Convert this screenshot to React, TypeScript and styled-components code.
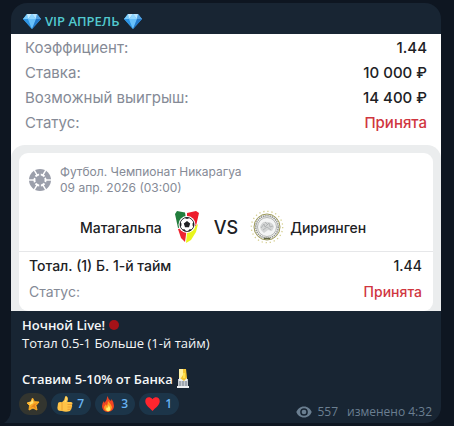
import React from "react";
import styled, { createGlobalStyle } from "styled-components";

const GlobalStyle = createGlobalStyle`
  *, *::before, *::after { box-sizing: border-box; }
  body {
    margin: 0;
    background: #0e1621;
    font-family: "Open Sans", "Noto Sans", sans-serif;
  }
`;

const Chat = styled.main`
  padding: 3px 13px 3px 11px;
`;

const Message = styled.article`
  position: relative;
  background: #182533;
  border-radius: 16px 16px 16px 0;
`;

const Tail = styled.svg`
  position: absolute;
  left: -7px;
  bottom: 0;
  width: 7px;
  height: 12px;
`;

const Header = styled.header`
  display: flex;
  align-items: center;
  gap: 4px;
  height: 31px;
  padding: 4px 12px 0;
`;

const Channel = styled.a`
  color: #52c9cf;
  font-size: 13px;
  font-weight: 600;
  line-height: 18px;
  text-decoration: none;
`;

const Photo = styled.section`
  background: #ffffff;
  font-family: Inter, Roboto, sans-serif;
`;

const Summary = styled.dl`
  margin: 0;
  padding: 1px 14px 10px;
`;

const SummaryRow = styled.div`
  display: flex;
  justify-content: space-between;
  font-size: 15px;
  line-height: 25px;
`;

const Label = styled.dt`
  color: #858a96;
`;

const Value = styled.dd<{ $accepted?: boolean }>`
  margin: 0;
  font-weight: 500;
  color: ${(p) => (p.$accepted ? "#d0363f" : "#202124")};
`;

const CardFrame = styled.div`
  padding: 8px 8px 0;
  background: #ebedee;
  border-radius: 14px 14px 0 0;
`;

const Card = styled.div`
  background: #ffffff;
  border-radius: 9px;
`;

const Event = styled.div`
  display: flex;
  align-items: center;
  gap: 9px;
  padding: 11px 10px 0;
`;

const EventText = styled.p`
  margin: 0;
  color: #858a96;
  font-size: 12px;
  line-height: 16px;
`;

const Teams = styled.div`
  display: grid;
  grid-template-columns: 1fr auto 1fr;
  align-items: center;
  gap: 12px;
  height: 56px;
  padding-top: 7px;
  border-bottom: 1px solid #e6e7e9;
`;

const Team = styled.div<{ $away?: boolean }>`
  display: flex;
  align-items: center;
  justify-content: ${(p) => (p.$away ? "flex-start" : "flex-end")};
  gap: ${(p) => (p.$away ? 6 : 12)}px;
  padding-right: ${(p) => (p.$away ? 0 : 2)}px;
  color: #202124;
  font-size: 14px;
  font-weight: 500;
`;

const Versus = styled.span`
  color: #202124;
  font-size: 18px;
  font-weight: 500;
`;

const Bets = styled.dl`
  margin: 0;
  padding: 1px 11px 6px 10px;
`;

const BetRow = styled.div`
  display: flex;
  justify-content: space-between;
  font-size: 14px;
  line-height: 26px;
`;

const BetName = styled.dt`
  color: #202124;
  font-weight: 500;
`;

const Caption = styled.div`
  padding: 5px 11px 0;
  color: #f5f7f8;
  font-size: 13px;
  line-height: 18px;
`;

const Line = styled.p<{ $bold?: boolean; $spaced?: boolean }>`
  display: flex;
  align-items: center;
  gap: 4px;
  height: 18px;
  margin: ${(p) => (p.$spaced ? "18px 0 0" : "0")};
  font-weight: ${(p) => (p.$bold ? 600 : 400)};
`;

const Footer = styled.footer`
  display: flex;
  align-items: flex-end;
  justify-content: space-between;
  padding: 5px 9px 2px 8px;
`;

const Reactions = styled.div`
  display: flex;
  gap: 4px;
  padding-bottom: 6px;
`;

const Reaction = styled.button<{ $paid?: boolean }>`
  display: flex;
  align-items: center;
  justify-content: ${(p) => (p.$paid ? "center" : "space-between")};
  width: ${(p) => (p.$paid ? 28 : 40)}px;
  height: 22px;
  padding: ${(p) => (p.$paid ? "0" : "0 7px 0 6px")};
  border: 0;
  border-radius: 11px;
  background: ${(p) => (p.$paid ? "#33352f" : "#1c3549")};
  color: #67b3f3;
  font: 600 12px/22px "Open Sans", "Noto Sans", sans-serif;
  cursor: pointer;
`;

const Meta = styled.div`
  display: flex;
  align-items: center;
  gap: 5px;
  color: #6b7f91;
  font-size: 12px;
  line-height: 18px;
`;

const Edited = styled.span`
  margin-left: 4px;
`;

const Diamond = () => (
  <svg width="18" height="16" viewBox="0 0 18 16" aria-hidden="true">
    <path d="M4 1h10l4 5-9 10L0 6z" fill="#44a9ee" />
    <path d="M4 1 0 6h5z" fill="#79cbfa" />
    <path d="M4 1h5L5 6z" fill="#c5ecff" />
    <path d="M9 1 5 6h8z" fill="#8ed6ff" />
    <path d="M9 1h5l-1 5z" fill="#b8e5ff" />
    <path d="m14 1 4 5h-5z" fill="#529fdf" />
    <path d="M0 6h5l4 10z" fill="#2d94e4" />
    <path d="M5 6h8L9 16z" fill="#68c0fa" />
    <path d="M13 6h5L9 16z" fill="#2478c8" />
  </svg>
);

const SportBall = () => (
  <svg width="22" height="22" viewBox="-11 -11 22 22" aria-hidden="true">
    <circle r="11" fill="#9b9fab" />
    <circle r="5.600" fill="none" stroke="#fff" strokeWidth="2" />
    {[0, 60, 120, 180, 240, 300].map((angle) => (
      <g key={angle} transform={`rotate(${angle})`}>
        <path d="M6 0h5.500" stroke="#fff" strokeWidth="1.400" />
        <path d="M3.500-2.100 7-4.100" stroke="#9b9fab" strokeWidth="1.600" />
      </g>
    ))}
  </svg>
);

const HomeCrest = () => (
  <svg width="26" height="34" viewBox="0 0 26 34" role="img" aria-label="Матагальпа">
    <path d="M3 1 11 2.500 13 16 4 18 1 4z" fill="#217d3c" />
    <path d="M13 3 22 1 25 3 22 16 13 16z" fill="#ed1c2c" />
    <path d="M4 19 13 17 11 32 7 28z" fill="#ee2430" />
    <path d="M24 14 22 22 17 30 12 33 13 23z" fill="#e9f51c" />
    <circle cx="13" cy="14.500" r="8.500" fill="#fff" />
    <circle cx="13" cy="14.500" r="7" fill="#fff" stroke="#202224" strokeWidth=".9" />
    <path d="m13 11 3.200 2.400-1.200 3.800h-4l-1.200-3.800zM10.500 7.800l2.500 1.200 2.500-1.200-2.500-.6zM20 12l-1.500 1.500.2 2.500 1.300.8zM6 12l1.500 1.500-.2 2.500-1.300.8zM8 19.500l2.500-.3 1.500 2-1.800-.3zM18 19.500l-2.500-.3-1.500 2 1.800-.3z" fill="#202224" />
  </svg>
);

const AwayCrest = () => (
  <svg width="34" height="34" viewBox="0 0 34 34" role="img" aria-label="Дириянген">
    <circle cx="17" cy="17" r="15.700" fill="none" stroke="#d5cf90" strokeWidth="1.300" strokeDasharray="1.300 2.800" />
    <circle cx="17" cy="17" r="13" fill="#f7f7f3" stroke="#9b9858" strokeWidth="1" />
    <circle cx="17" cy="17" r="11.200" fill="none" stroke="#8f9292" strokeWidth="1.600" strokeDasharray="1.400 .8" />
    <circle cx="17" cy="17" r="9.500" fill="#f4f5f5" stroke="#969999" strokeWidth=".7" />
    <path d="M10 17q2-6 7-5 6 0 7 5l-2 4-4-1-4 3-3-3z" fill="#d3d5d5" />
    <path d="m11 18 3-4 1 3 4-4 1 4 3-1M13 20l4-3 4 3M15 12l3 3" fill="none" stroke="#a5a8a9" strokeWidth=".7" />
    <path d="M14 28.500h6" stroke="#626747" strokeWidth="1.500" />
  </svg>
);

const RedDot = () => (
  <svg width="10" height="10" viewBox="0 0 10 10" aria-hidden="true">
    <circle cx="5" cy="5" r="5" fill="#a51218" />
  </svg>
);

const Candle = () => (
  <svg width="12" height="20" viewBox="0 0 12 20" aria-hidden="true">
    <path d="M1 10h10v8H1z" fill="#c5cbd1" />
    <path d="M0 17h12v2H0z" fill="#edf0f2" />
    <path d="M2 9h8v3H2z" fill="#eef0f2" />
    <path d="M3 12v5M6 12v5M9 12v5" stroke="#78828e" />
    <path d="M2 0h7l1 9-3 3-4-3z" fill="#f5c532" />
    <path d="M2 0h4v6L4 9H2z" fill="#fff1a3" />
    <path d="M6 4h2v5H6z" fill="#ffe34f" />
  </svg>
);

const Star = () => (
  <svg width="14" height="14" viewBox="0 0 14 14" aria-hidden="true">
    <path d="m6.500 1 2 3.700L13 5l-3 3.500 1 4.500-4-2-4 2 .5-4.500L1 6l4-1.200z" fill="#fbad26" stroke="#fbad26" strokeWidth="1" strokeLinejoin="round" />
    <path d="m6.500 2 1 4L3 8.500 4 6 1.500 5.800 5 5z" fill="#ffe174" />
    <path d="m8 7 4-1-3 2 1 4-3-2-3 1z" fill="#e9851f" />
  </svg>
);

const ThumbsUp = () => (
  <svg width="16" height="16" viewBox="0 0 16 16" aria-hidden="true">
    <path d="M1 7.500Q1 6 3 6l2 .3Q8 4 8 1q0-1 1.300-1Q11 1 11 3L10.300 6H14q2 .3 1.400 2l-.4 1 .2 1.500-.6 1.200-.3 1.500-.8 1L13 15q-4 1.500-8 0l-3-.3Q0 14 .5 11z" fill="#ffc347" />
    <path d="M5 6.500v8M10.500 8.500H15M10.500 11H15M10.500 13.300h3.500" stroke="#e6952c" strokeWidth=".8" fill="none" />
    <path d="M9 1q1 2-1 5" stroke="#ffe277" fill="none" />
  </svg>
);

const Flame = () => (
  <svg width="14" height="16" viewBox="0 0 14 16" aria-hidden="true">
    <path d="M6.500 0Q7 3 10 5l.5-2Q13 6 13 10q0 5-6 6-6-.5-6-6 0-3 2-5l.5 2Q6 4 6.500 0z" fill="#f04422" />
    <path d="M7 5q3 3 4 6-.5 4-4 4.500Q3 15 3 11l2-3 .5 2Q7 8 7 5z" fill="#ff9f22" />
    <path d="M7.500 9Q10 12 9 14.500q-3 2-4-1.500l1-2 .5 1q1-1 1-3z" fill="#fff06a" />
  </svg>
);

const Heart = () => (
  <svg width="15" height="14" viewBox="0 0 15 14" aria-hidden="true">
    <path d="M7.500 2.200C5-1 0-.2.300 4.500.5 8.500 5 11 7.500 14 10 11 14.500 8.500 14.700 4.500 15-.2 10-1 7.500 2.200z" fill="#ff252e" />
  </svg>
);

const Eye = () => (
  <svg width="16" height="12" viewBox="0 0 16 12" aria-hidden="true">
    <path d="M8 0.500C4 .5 1.500 3 .3 6 1.500 9 4 11.500 8 11.500S14.500 9 15.700 6C14.500 3 12 .5 8 .5z" fill="#6b7f91" />
    <circle cx="8" cy="6" r="3.100" fill="none" stroke="#182533" strokeWidth="1.500" />
  </svg>
);

const summary = [
  { label: "Коэффициент:", value: "1.44" },
  { label: "Ставка:", value: "10 000 ₽" },
  { label: "Возможный выигрыш:", value: "14 400 ₽" },
  { label: "Статус:", value: "Принята", accepted: true },
];

const reactions = [
  { name: "Палец вверх", icon: <ThumbsUp />, count: 7 },
  { name: "Огонь", icon: <Flame />, count: 3 },
  { name: "Сердце", icon: <Heart />, count: 1 },
];

export default function App() {
  return (
    <>
      <GlobalStyle />
      <Chat>
        <Message>
          <Tail viewBox="0 0 7 12" aria-hidden="true">
            <path d="M7 0Q6 8 0 12h7z" fill="#182533" />
          </Tail>
          <Header>
            <Diamond />
            <Channel href="#channel">VIP АПРЕЛЬ</Channel>
            <Diamond />
          </Header>
          <Photo>
            <Summary>
              {summary.map((row) => (
                <SummaryRow key={row.label}>
                  <Label>{row.label}</Label>
                  <Value $accepted={row.accepted}>{row.value}</Value>
                </SummaryRow>
              ))}
            </Summary>
            <CardFrame>
              <Card>
                <Event>
                  <SportBall />
                  <EventText>
                    Футбол. Чемпионат Никарагуа
                    <br />
                    09 апр. 2026 (03:00)
                  </EventText>
                </Event>
                <Teams>
                  <Team>
                    <span>Матагальпа</span>
                    <HomeCrest />
                  </Team>
                  <Versus>VS</Versus>
                  <Team $away>
                    <AwayCrest />
                    <span>Дириянген</span>
                  </Team>
                </Teams>
                <Bets>
                  <BetRow>
                    <BetName>Тотал. (1) Б. 1-й тайм</BetName>
                    <Value>1.44</Value>
                  </BetRow>
                  <BetRow>
                    <Label>Статус:</Label>
                    <Value $accepted>Принята</Value>
                  </BetRow>
                </Bets>
              </Card>
            </CardFrame>
          </Photo>
          <Caption>
            <Line $bold>
              Ночной Live! <RedDot />
            </Line>
            <Line>Тотал 0.5-1 Больше (1-й тайм)</Line>
            <Line $bold $spaced>
              Ставим 5-10% от Банка <Candle />
            </Line>
          </Caption>
          <Footer>
            <Reactions>
              <Reaction $paid type="button" aria-label="Звезда">
                <Star />
              </Reaction>
              {reactions.map((r) => (
                <Reaction key={r.name} type="button" aria-label={`${r.name}: ${r.count}`}>
                  {r.icon}
                  {r.count}
                </Reaction>
              ))}
            </Reactions>
            <Meta>
              <Eye />
              <span>557</span>
              <Edited>изменено 4:32</Edited>
            </Meta>
          </Footer>
        </Message>
      </Chat>
    </>
  );
}
